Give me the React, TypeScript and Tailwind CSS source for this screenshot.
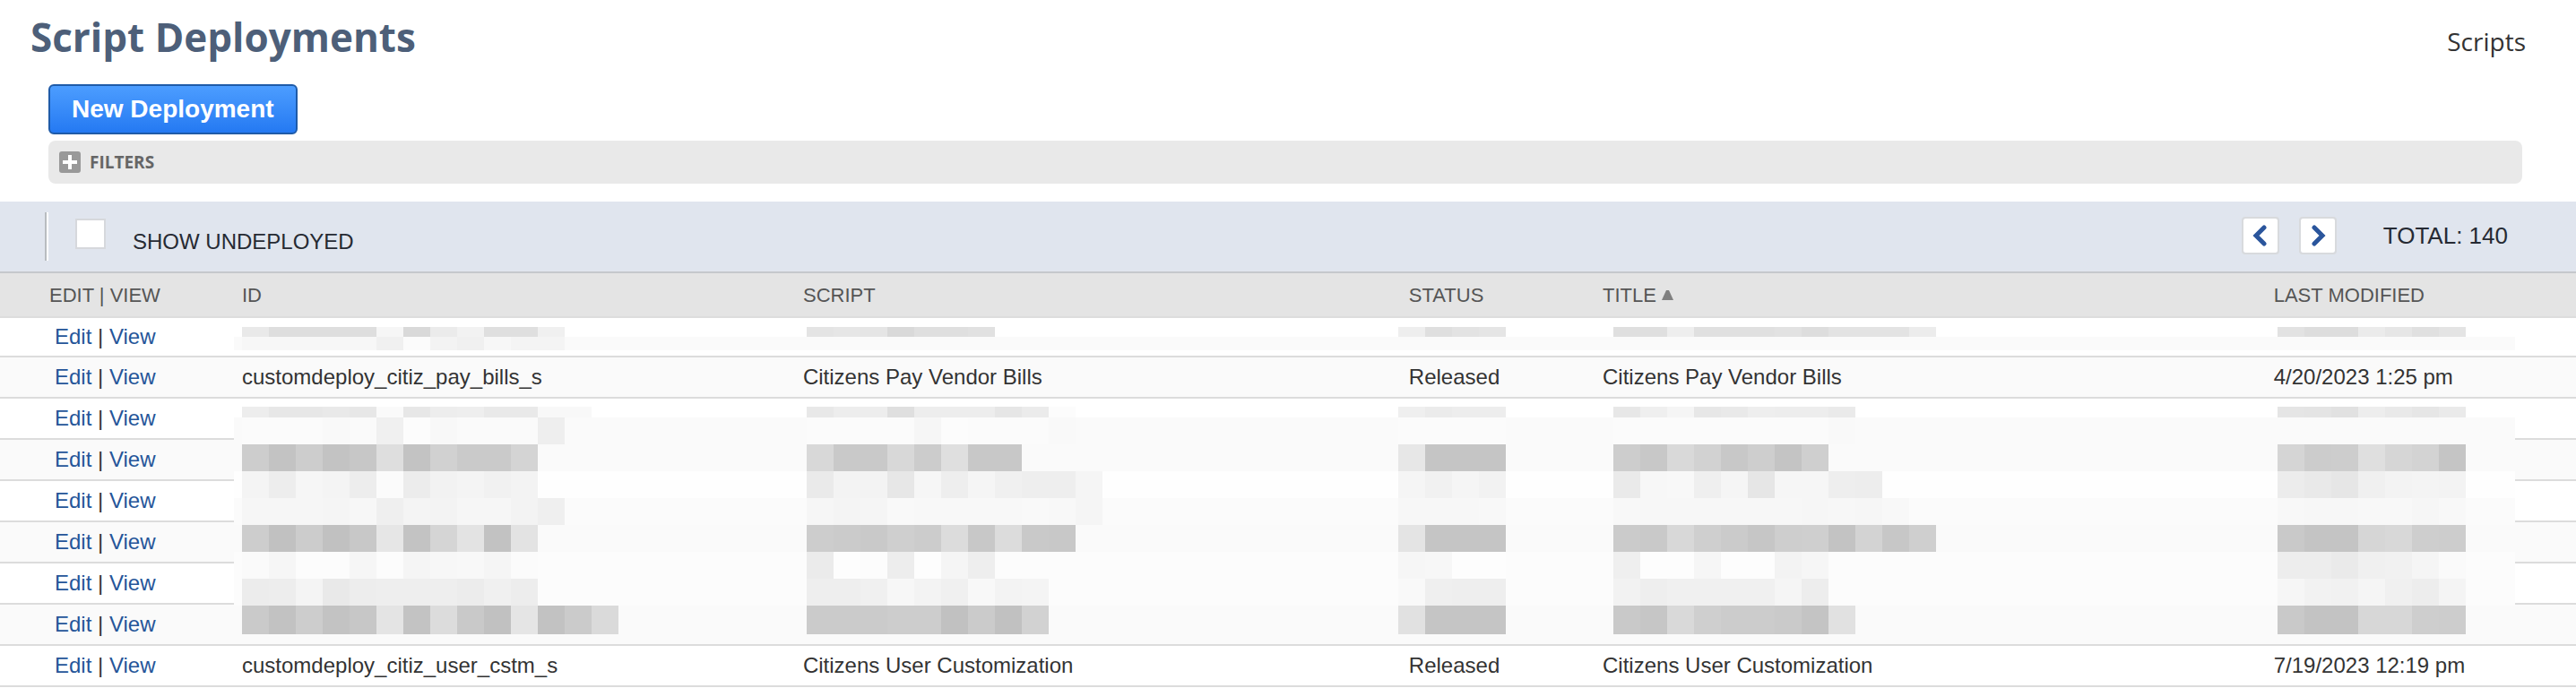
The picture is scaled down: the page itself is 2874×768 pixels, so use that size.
import React from 'react';

interface Deployment {
  id: string;
  script: string;
  status: string;
  title: string;
  modified: string;
}

interface Band {
  height: number;
  background: string;
  cells: string[];
}

type ColumnKey = 'id' | 'script' | 'status' | 'title' | 'modified';

const columnKeys: ColumnKey[] = ['id', 'script', 'status', 'title', 'modified'];

const textPadding: Record<ColumnKey, string> = {
  id: 'pl-[9px]',
  script: 'pl-[9px]',
  status: 'pl-[21px]',
  title: 'pl-[9px]',
  modified: 'pl-[9px]',
};

const blockPadding: Record<ColumnKey, string> = {
  id: 'pl-[9px]',
  script: 'pl-[13px]',
  status: 'pl-[9px]',
  title: 'pl-[21px]',
  modified: 'pl-[13px]',
};

const payBills: Deployment = {
  id: 'customdeploy_citiz_pay_bills_s',
  script: 'Citizens Pay Vendor Bills',
  status: 'Released',
  title: 'Citizens Pay Vendor Bills',
  modified: '4/20/2023 1:25 pm',
};

const userCustomization: Deployment = {
  id: 'customdeploy_citiz_user_cstm_s',
  script: 'Citizens User Customization',
  status: 'Released',
  title: 'Citizens User Customization',
  modified: '7/19/2023 12:19 pm',
};

// Each band is a height, a background and a two-digit grey for every 30px block
const makeBands = (sizes: [number, string][], shades: string[]): Band[] =>
  sizes.map(([height, background], i) => ({
    height,
    background,
    cells: shades[i] ? shades[i].split(' ').map(s => `#${s}${s}${s}`) : [],
  }));

const shortSizes: [number, string][] = [
  [10, '#ffffff'],
  [11, '#ffffff'],
  [15, '#fafafa'],
  [6, '#ffffff'],
];

const tallSizes: [number, string][] = [
  [9, '#ffffff'],
  [12, '#ffffff'],
  [30, '#fafafa'],
  [30, '#fafafa'],
  [30, '#fefefe'],
  [30, '#fbfbfb'],
  [30, '#fafafa'],
  [30, '#fcfcfc'],
  [30, '#fcfcfc'],
  [32, '#fafafa'],
  [11, '#fafafa'],
];

const shortShades: Record<ColumnKey, string[]> = {
  id: ['', 'e9 de de de de f6 d9 eb f2 df df f0', 'f7 f7 f7 f7 f7 f0 fb f3 f0 f7 f4 f4'],
  script: ['', 'e4 e6 e5 d9 df df e1'],
  status: ['', 'ee df e3 e5'],
  title: ['', 'df df ee e0 e0 e0 e2 dd e3 e3 e3 ec'],
  modified: ['', 'e2 dd dd eb e6 e0 e4'],
};

const tallShades: Record<ColumnKey, string[]> = {
  id: [
    '',
    'ed e7 e7 e9 e7 fa e7 ed ee e9 e9 f8 f8',
    'fb fb fb f9 fa f0 fc f8 fa fa fa ee',
    'cd c3 cd c3 c7 de c3 d1 ca ca d4',
    'f4 ed f6 f4 ed fb ec f2 f4 f1 f3',
    'f6 f6 f6 f5 f7 ef f4 f3 f6 f6 f3 ef',
    'cd c1 cc c1 c8 e6 c3 d5 e3 c2 e3',
    'fa f6 fc fc f6 fc f5 f7 f8 f5 fb',
    'ec ed f4 e9 ed ee ee ee ec f0 ed',
    'ca c2 cd c3 c7 e4 c3 dc c9 c1 e5 c2 cb da',
  ],
  script: [
    '',
    'e8 ed ed df ed ed ed e6 eb fc',
    'fb fb fb fb f6 fc fb fb fb f9',
    'd8 c9 c9 d8 cc df c8 c8',
    'ea f3 f3 e7 f6 ee f5 f0 ee ee f5',
    'f6 f4 f5 f9 f8 f8 f8 f8 f9 f8 f5',
    'cd cb c9 cf cc dc c8 dc c9 c8',
    'eb fd fc ed fd f5 ee fc fc',
    'ee ee f0 f7 f3 f0 f8 f3 f4',
    'cb cb cb cd cd c1 cb c1 d2',
  ],
  status: [
    '',
    'ef eb ed ed',
    'fb fb fb fb',
    'e7 c5 c5 c5',
    'f5 f1 f5 f2',
    'f7 f7 f7 f8',
    'e4 c5 c5 c5',
    'f6 f7 fd fd',
    'f9 ef ee ee',
    'e1 c5 c5 c5',
  ],
  title: [
    '',
    'e7 ef f5 e7 e9 ee ed ed ea',
    'fb fb fb fb fb fb fb fb f9',
    'cd c8 d9 d2 c8 ce c4 cf',
    'ea f7 f8 ef f5 e6 f6 f6 ee ed',
    'f8 f7 f7 f7 f7 f7 f7 f6 f7 f6 f8',
    'cb c9 d8 cf cb c6 ce cf c3 d3 c7 cf',
    'ef fd fd f6 fd fd f3 f6',
    'f2 ee f0 f0 f0 f0 f5 ed',
    'c9 c6 d9 cf cc cc ca c4 e1',
  ],
  modified: [
    '',
    'e5 e4 e1 ed e9 e6 ea',
    'fa fa fa fa fa fa fa',
    'd5 cc cd df d6 d3 c5',
    'ec e9 e6 f0 f3 f4 f3',
    'f8 f7 f7 f8 f8 f6 f8',
    'c9 c4 c4 d6 d8 ce cd',
    'ed ed ea f0 f1 f5 fa',
    'f6 f2 f1 f5 f0 ed f4',
    'c9 c3 c3 d7 d7 ce cd',
  ],
};

const Blocks: React.FC<{ bands: Band[]; padding: string }> = ({ bands, padding }) => (
  <div aria-hidden="true">
    {bands.map((band, i) => (
      <div key={i} className={`flex ${padding}`} style={{ height: band.height, background: band.background }}>
        {band.cells.map((color, j) => (
          <span key={j} className="w-[30px] shrink-0" style={{ background: color }} />
        ))}
      </div>
    ))}
  </div>
);

const EditView: React.FC<{ height?: string }> = ({ height = 'h-[46px]' }) => (
  <td className={`${height} border-b-2 border-[#dcdcdc] p-0 pl-[61px] leading-[40px]`}>
    <a href="#edit" className="text-[#255599]">Edit</a> | <a href="#view" className="text-[#255599]">View</a>
  </td>
);

const DeploymentRow: React.FC<{ deployment: Deployment; className: string }> = ({ deployment, className }) => (
  <tr className={className}>
    <EditView />
    {columnKeys.map(key => (
      <td key={key} className={`border-b-2 border-[#dcdcdc] py-0 pr-0 leading-[40px] ${textPadding[key]}`}>
        {deployment[key]}
      </td>
    ))}
    <td className="border-b-2 border-[#dcdcdc] p-0" />
  </tr>
);

const PageHeader: React.FC = () => (
  <header className="flex items-start justify-between pl-[34px] pr-14 font-['Open_Sans',sans-serif]">
    <h1 className="pt-3 text-[44px] font-bold leading-[58px] text-[#4d5f79]">Script Deployments</h1>
    <a href="#scripts" className="pt-[27px] text-[28px] leading-[38px] text-[#333333]">Scripts</a>
  </header>
);

const pagerClass = 'flex size-[42px] items-center justify-center rounded border-2 border-[#d8dadd] bg-white bg-clip-padding';

const Toolbar: React.FC = () => (
  <div className="mt-5 flex h-[78px] items-start justify-between bg-[#e0e5ee] pl-[50px] pr-[76px] text-[#262a33]">
    <div className="flex items-start">
      <span className="mt-3 h-[54px] w-1 border-l-2 border-r-2 border-l-[#b8bcc0] border-r-white" />
      <input
        id="undeployed"
        type="checkbox"
        className="ml-[30px] mt-[19px] size-[34px] appearance-none border-2 border-[#d6d8dc] bg-white"
      />
      <label htmlFor="undeployed" className="ml-[30px] mt-[27px] text-[24px] leading-[36px]">SHOW UNDEPLOYED</label>
    </div>
    <div className="flex items-center pt-4">
      <button type="button" aria-label="Previous page" className={pagerClass}>
        <svg width="20" height="26" viewBox="0 0 20 26" fill="none" stroke="#2a559c" strokeWidth="5" strokeLinecap="round">
          <path d="M14 4 5 13l9 9" />
        </svg>
      </button>
      <button type="button" aria-label="Next page" className={`ml-[22px] ${pagerClass}`}>
        <svg width="20" height="26" viewBox="0 0 20 26" fill="none" stroke="#2a559c" strokeWidth="5" strokeLinecap="round">
          <path d="m6 4 9 9-9 9" />
        </svg>
      </button>
      <span className="ml-[52px] text-[26px] leading-[44px]">TOTAL: 140</span>
    </div>
  </div>
);

const headingClass = 'h-[52px] border-b-2 border-t-2 border-b-[#dddddd] border-t-[#c5c8cc] py-0 pr-0 text-left font-normal';

export default function App() {
  return (
    <div className="min-h-screen bg-white font-['Liberation_Sans',Arial,sans-serif]">
      <PageHeader />

      <main>
        <div className="pl-[54px] pr-[60px]">
          <button
            type="button"
            className="mt-6 block h-14 rounded-md border-2 border-[#1f5ba8] bg-linear-to-b from-[#4c9dff] to-[#2479f2] px-6 text-[28px] font-bold leading-[50px] text-white"
          >
            New Deployment
          </button>
          <button
            type="button"
            className="mt-[7px] flex h-12 w-full items-center rounded-lg bg-[#e9e9e9] pl-3 font-['Open_Sans',sans-serif] text-[19px] font-bold text-[#666666]"
          >
            <svg width="24" height="24" viewBox="0 0 24 24" aria-hidden="true">
              <rect width="24" height="24" rx="3" fill="#999999" />
              <path d="M12 4v16M4 12h16" stroke="#ffffff" strokeWidth="4" />
            </svg>
            <span className="ml-[10px]">FILTERS</span>
          </button>
        </div>

        <Toolbar />

        <table className="w-full table-fixed border-separate border-spacing-0 text-[24px] text-[#333333]">
          <colgroup>
            <col className="w-[261px]" />
            <col className="w-[21.78%]" />
            <col className="w-[23.1%]" />
            <col className="w-[7.94%]" />
            <col className="w-[26.05%]" />
            <col />
            <col className="w-[68px]" />
          </colgroup>
          <thead className="bg-[#e4e4e4] text-[22px] text-[#555555]">
            <tr>
              <th className={`${headingClass} pl-[55px]`}>EDIT | VIEW</th>
              <th className={`${headingClass} ${textPadding.id}`}>ID</th>
              <th className={`${headingClass} ${textPadding.script}`}>SCRIPT</th>
              <th className={`${headingClass} ${textPadding.status}`}>STATUS</th>
              <th className={`${headingClass} ${textPadding.title}`}>
                <span className="flex items-center gap-[6px]">
                  TITLE
                  <svg width="13" height="11" viewBox="0 0 13 11" aria-hidden="true">
                    <path d="M5 0h3l5 11H0z" fill="#808080" />
                  </svg>
                </span>
              </th>
              <th className={`${headingClass} ${textPadding.modified}`}>LAST MODIFIED</th>
              <th className={`${headingClass} pl-0`} />
            </tr>
          </thead>
          <tbody>
            <tr>
              <EditView height="h-11" />
              {columnKeys.map(key => (
                <td key={key} className="border-b-2 border-[#dcdcdc] p-0 align-top">
                  <Blocks bands={makeBands(shortSizes, shortShades[key])} padding={blockPadding[key]} />
                </td>
              ))}
              <td className="border-b-2 border-[#dcdcdc] p-0" />
            </tr>

            <DeploymentRow deployment={payBills} className="bg-[#fafafa]" />

            {/* Six hidden deployments share one set of blocks */}
            {[0, 1, 2, 3, 4, 5].map(i => (
              <tr key={i} className="odd:bg-white even:bg-[#fafafa]">
                <EditView />
                {i === 0 && columnKeys.map(key => (
                  <td key={key} rowSpan={6} className="border-b-2 border-[#dcdcdc] p-0 align-top">
                    <Blocks bands={makeBands(tallSizes, tallShades[key])} padding={blockPadding[key]} />
                  </td>
                ))}
                <td className="border-b-2 border-[#dcdcdc] p-0" />
              </tr>
            ))}

            <DeploymentRow deployment={userCustomization} className="bg-white" />
          </tbody>
        </table>
      </main>
    </div>
  );
}
